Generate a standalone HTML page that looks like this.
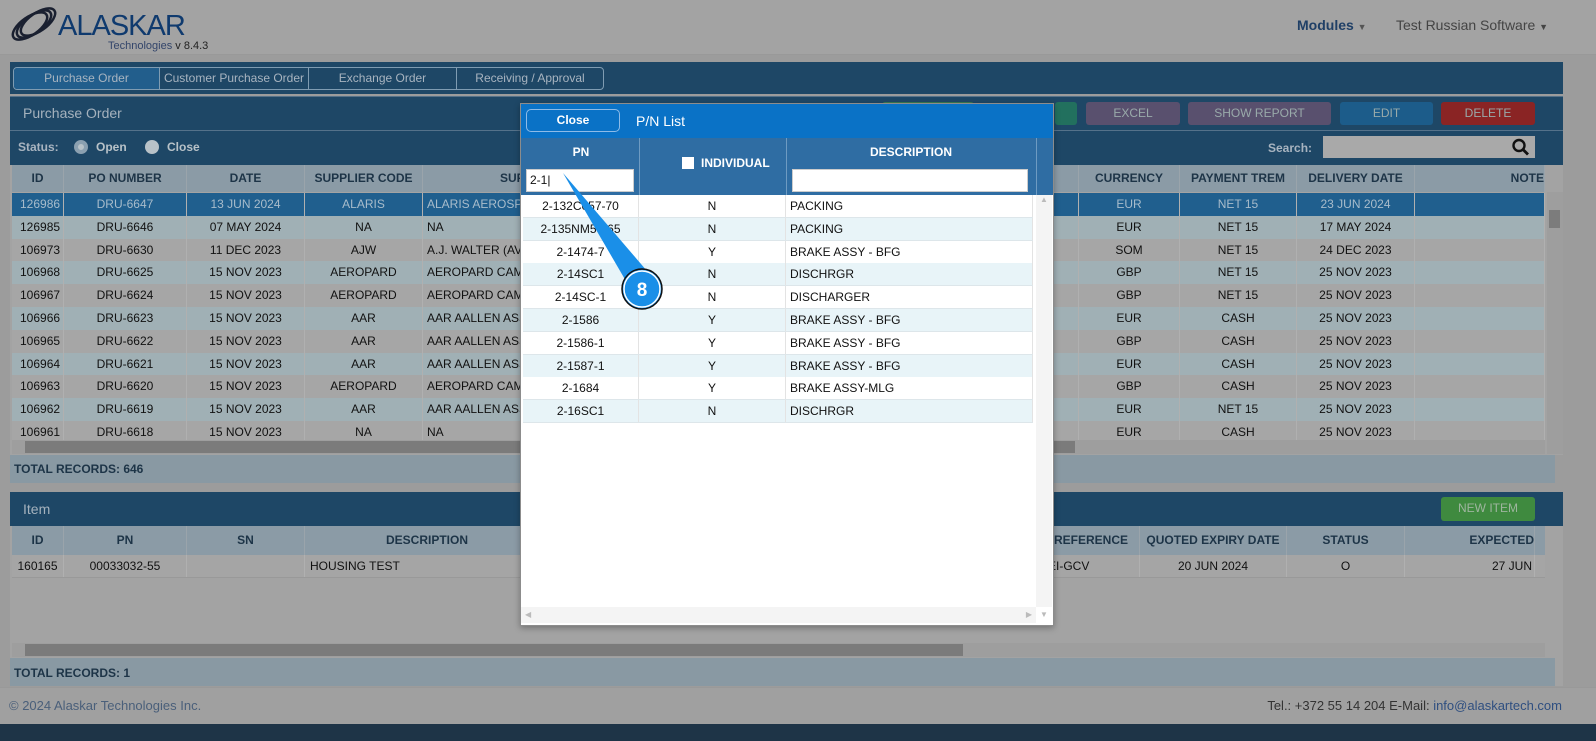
<!DOCTYPE html>
<html><head><meta charset="utf-8"><style>
*{box-sizing:border-box;margin:0;padding:0}
body{width:1596px;height:741px;overflow:hidden;background:#9c9c9c;font-family:"Liberation Sans",sans-serif;font-size:12px;color:#111;position:relative}
.a{position:absolute}
.row{position:absolute;left:12px;width:1533px;height:23px;display:flex}
.row div{border-right:1px solid #b0b0b0;line-height:22px;text-align:center;white-space:nowrap;overflow:hidden;flex:none}
.hd div{font-weight:bold;color:#1d3447;border-right:1px solid #9aa4ab}
.btn{position:absolute;top:102px;height:23px;border-radius:3px;color:#9aa;text-align:center;line-height:22px;font-size:12px}
.mr{position:absolute;left:523px;width:510px;height:23px;display:flex;border-bottom:1px solid #dde6ea}
.mr div{line-height:22px;flex:none;border-right:1px solid #e3e3e3}
</style></head><body>
<div class="a" style="left:0;top:0;width:1596px;height:55px;background:#a3a3a3;border-bottom:1px solid #999"></div>
<svg class="a" style="left:10px;top:4px" width="60" height="42" viewBox="0 0 60 42"><g fill="none" stroke="#1a2030" stroke-width="2.5"><ellipse cx="28" cy="18" rx="20" ry="9" transform="rotate(-35 28 18)"/><ellipse cx="24" cy="20" rx="20" ry="9" transform="rotate(-35 24 20)"/><ellipse cx="20" cy="22" rx="20" ry="9" transform="rotate(-35 20 22)"/></g></svg>
<div class="a" style="left:58px;top:10px;font-size:29px;color:#0f3a6e;letter-spacing:-1px">ALASKAR</div>
<div class="a" style="left:108px;top:40px;font-size:11px;color:#33456a">Technologies <span style="color:#222">v 8.4.3</span></div>
<div class="a" style="left:1297px;top:17px;font-weight:bold;font-size:14px;color:#1f3f66">Modules <span style="font-size:9px;color:#555">▼</span></div>
<div class="a" style="left:1396px;top:17px;font-size:14px;color:#444">Test Russian Software <span style="font-size:9px">▼</span></div>
<div class="a" style="left:10px;top:62px;width:1553px;height:32px;background:#1e4766"></div>
<div class="a" style="left:13px;top:67px;width:591px;height:23px;border:1px solid #7f9cb2;border-radius:4px;display:flex;color:#a8b4c0;font-size:12px">
<div style="width:146px;background:#225e8c;text-align:center;line-height:21px;border-radius:3px 0 0 3px;border-right:1px solid #7f9cb2">Purchase Order</div>
<div style="width:149px;text-align:center;line-height:21px;border-right:1px solid #7f9cb2">Customer Purchase Order</div>
<div style="width:148px;text-align:center;line-height:21px;border-right:1px solid #7f9cb2">Exchange Order</div>
<div style="width:146px;text-align:center;line-height:21px">Receiving / Approval</div></div>
<div class="a" style="left:10px;top:96px;width:1553px;height:34px;background:#1e4766;border-top:1px solid #55728a"></div>
<div class="a" style="left:23px;top:105px;font-size:14px;color:#a5b2bd">Purchase Order</div>
<div class="btn" style="left:882px;width:92px;background:#3a7a52"></div>
<div class="btn" style="left:1055px;width:22px;background:#22705e"></div>
<div class="btn" style="left:1086px;width:94px;background:#59506e">EXCEL</div>
<div class="btn" style="left:1188px;width:143px;background:#59506e">SHOW REPORT</div>
<div class="btn" style="left:1340px;width:93px;background:#1c5c8a">EDIT</div>
<div class="btn" style="left:1441px;width:94px;background:#8a2424">DELETE</div>
<div class="a" style="left:10px;top:130px;width:1553px;height:35px;background:#1e4766;border-top:1px solid #55728a"></div>
<div class="a" style="left:18px;top:140px;font-weight:bold;color:#a8b4c0">Status:</div>
<div class="a" style="left:74px;top:140px;width:14px;height:14px;border-radius:50%;background:#b8c2c8;border:4px solid #8ba0b0"></div>
<div class="a" style="left:96px;top:140px;font-weight:bold;color:#b8c2c8">Open</div>
<div class="a" style="left:145px;top:140px;width:14px;height:14px;border-radius:50%;background:#b8c2c8"></div>
<div class="a" style="left:167px;top:140px;font-weight:bold;color:#b8c2c8">Close</div>
<div class="a" style="left:1268px;top:141px;font-weight:bold;color:#a8b4c0">Search:</div>
<div class="a" style="left:1323px;top:136px;width:212px;height:22px;background:#a9a9a9"></div>
<svg class="a" style="left:1511px;top:138px" width="20" height="18" viewBox="0 0 20 18"><circle cx="8" cy="7.5" r="5.5" fill="none" stroke="#111" stroke-width="2.4"/><line x1="12" y1="11.5" x2="17" y2="16.5" stroke="#111" stroke-width="2.8"/></svg>
<div class="a" style="left:10px;top:165px;width:1553px;height:290px;background:#a3a3a3"></div>
<div class="row hd" style="top:165px;height:27px;background:#8b9ba6"><div style="width:52px;line-height:27px">ID</div><div style="width:123px;line-height:27px">PO NUMBER</div><div style="width:118px;line-height:27px">DATE</div><div style="width:118px;line-height:27px">SUPPLIER CODE</div><div style="width:656px;line-height:27px;text-align:left;padding-left:77px">SUP</div><div style="width:101px;line-height:27px">CURRENCY</div><div style="width:117px;line-height:27px">PAYMENT TREM</div><div style="width:118px;line-height:27px">DELIVERY DATE</div><div style="width:130px;line-height:27px;text-align:right">NOTE</div></div>
<div id="rows"></div>
<div class="a" style="left:1547px;top:192px;width:16px;height:262px;background:#9e9e9e"></div>
<div class="a" style="left:1549px;top:210px;width:11px;height:18px;background:#7c7c7c"></div>
<div class="a" style="left:12px;top:440px;width:1533px;height:14px;background:#9e9e9e"></div>
<div class="a" style="left:25px;top:441px;width:1050px;height:12px;background:#7b7b7b"></div>
<div class="a" style="left:10px;top:455px;width:1545px;height:28px;background:#8999a3"></div>
<div class="a" style="left:14px;top:462px;font-weight:bold;color:#1d3447">TOTAL RECORDS: 646</div>
<div class="a" style="left:10px;top:492px;width:1553px;height:34px;background:#1e4766"></div>
<div class="a" style="left:23px;top:501px;font-size:14px;color:#a5b2bd">Item</div>
<div class="a" style="left:1441px;top:497px;width:94px;height:24px;background:#3f8a3f;border-radius:3px;color:#9fb59f;text-align:center;line-height:23px">NEW ITEM</div>
<div class="a" style="left:10px;top:526px;width:1553px;height:160px;background:#a3a3a3"></div>
<div class="row hd" style="top:526px;height:29px;background:#8b9ba6"><div style="width:52px;line-height:29px">ID</div><div style="width:123px;line-height:29px">PN</div><div style="width:118px;line-height:29px">SN</div><div style="width:245px;line-height:29px">DESCRIPTION</div><div style="width:492px"></div><div style="width:98px;line-height:29px;text-align:right;padding-right:14px">R REFERENCE</div><div style="width:147px;line-height:29px">QUOTED EXPIRY DATE</div><div style="width:118px;line-height:29px">STATUS</div><div style="width:130px;line-height:29px;text-align:right">EXPECTED</div></div>
<div class="row" style="top:555px;background:#a5a5a5;border-bottom:1px solid #999"><div style="width:52px">160165</div><div style="width:123px">00033032-55</div><div style="width:118px"></div><div style="width:737px;text-align:left;padding-left:5px">HOUSING TEST</div><div style="width:98px;text-align:left;padding-left:6px">EI-GCV</div><div style="width:147px">20 JUN 2024</div><div style="width:118px">O</div><div style="width:130px;text-align:right;padding-right:2px">27 JUN</div></div>
<div class="a" style="left:12px;top:643px;width:1533px;height:14px;background:#9e9e9e"></div>
<div class="a" style="left:25px;top:644px;width:938px;height:12px;background:#7b7b7b"></div>
<div class="a" style="left:10px;top:658px;width:1545px;height:28px;background:#8999a3"></div>
<div class="a" style="left:14px;top:666px;font-weight:bold;color:#1d3447">TOTAL RECORDS: 1</div>
<div class="a" style="left:0;top:687px;width:1596px;height:37px;background:#a0a0a0;border-top:1px solid #999"></div>
<div class="a" style="left:9px;top:698px;font-size:13px;color:#4a5f7a">© 2024 Alaskar Technologies Inc.</div>
<div class="a" style="right:34px;top:698px;font-size:13px;color:#333">Tel.: +372 55 14 204 E-Mail: <span style="color:#2f4f80">info@alaskartech.com</span></div>
<div class="a" style="left:0;top:724px;width:1596px;height:17px;background:#1e3447"></div>
<div class="a" style="left:520px;top:103px;width:534px;height:523px;background:#fff;border:1px solid #8c8c8c;box-shadow:0 2px 6px rgba(0,0,0,.3)"></div>
<div class="a" style="left:521px;top:104px;width:532px;height:34px;background:#0a72c6"></div>
<div class="a" style="left:526px;top:109px;width:94px;height:23px;border:1px solid #8dbbe8;border-radius:5px;background:#0a72c6;color:#fff;font-weight:bold;text-align:center;line-height:20px">Close</div>
<div class="a" style="left:636px;top:113px;font-size:14px;color:#fff">P/N List</div>
<div class="a" style="left:521px;top:138px;width:532px;height:57px;background:#2f6da3"></div>
<div class="a" style="left:639px;top:138px;width:1px;height:57px;background:#6e9bc2"></div>
<div class="a" style="left:786px;top:138px;width:1px;height:57px;background:#6e9bc2"></div>
<div class="a" style="left:1036px;top:138px;width:1px;height:57px;background:#6e9bc2"></div>
<div class="a" style="left:523px;top:145px;width:116px;text-align:center;color:#fff;font-weight:bold">PN</div>
<div class="a" style="left:526px;top:169px;width:108px;height:23px;background:#fff;border:1px solid #ccc;padding-left:3px;line-height:21px">2-1|</div>
<div class="a" style="left:682px;top:157px;width:12px;height:12px;background:#fff"></div>
<div class="a" style="left:701px;top:156px;color:#fff;font-weight:bold">INDIVIDUAL</div>
<div class="a" style="left:786px;top:145px;width:250px;text-align:center;color:#fff;font-weight:bold">DESCRIPTION</div>
<div class="a" style="left:792px;top:169px;width:236px;height:23px;background:#fff;border:1px solid #ccc"></div>
<div id="mrows"></div>
<div class="a" style="left:1036px;top:195px;width:16px;height:412px;background:#f4f4f4;color:#bbb;font-size:8px;text-align:center">▲</div>
<div class="a" style="left:521px;top:607px;width:515px;height:16px;background:#f4f4f4;color:#bbb;font-size:8px;line-height:16px;padding:0 4px">◀<span style="float:right">▶</span></div>
<div class="a" style="left:1040px;top:610px;font-size:8px;color:#bbb">▼</div>
<svg class="a" style="left:560px;top:170px" width="110" height="142" viewBox="0 0 110 142"><path d="M3 3 L93 108 L70 118 Z" fill="#1a8fe8"/><circle cx="82" cy="119" r="20" fill="#1a8fe8" stroke="#111" stroke-width="1.5"/><circle cx="82" cy="119" r="18" fill="none" stroke="#fff" stroke-width="1.5"/><text x="82" y="126" text-anchor="middle" fill="#fff" font-family="Liberation Sans" font-weight="bold" font-size="19">8</text></svg>
<script>
var d=[["126986","DRU-6647","13 JUN 2024","ALARIS","ALARIS AEROSP","EUR","NET 15","23 JUN 2024"],["126985","DRU-6646","07 MAY 2024","NA","NA","EUR","NET 15","17 MAY 2024"],["106973","DRU-6630","11 DEC 2023","AJW","A.J. WALTER (AV","SOM","NET 15","24 DEC 2023"],["106968","DRU-6625","15 NOV 2023","AEROPARD","AEROPARD CAM","GBP","NET 15","25 NOV 2023"],["106967","DRU-6624","15 NOV 2023","AEROPARD","AEROPARD CAM","GBP","NET 15","25 NOV 2023"],["106966","DRU-6623","15 NOV 2023","AAR","AAR AALLEN ASS","EUR","CASH","25 NOV 2023"],["106965","DRU-6622","15 NOV 2023","AAR","AAR AALLEN ASS","GBP","CASH","25 NOV 2023"],["106964","DRU-6621","15 NOV 2023","AAR","AAR AALLEN ASS","EUR","CASH","25 NOV 2023"],["106963","DRU-6620","15 NOV 2023","AEROPARD","AEROPARD CAM","GBP","CASH","25 NOV 2023"],["106962","DRU-6619","15 NOV 2023","AAR","AAR AALLEN ASS","EUR","NET 15","25 NOV 2023"],["106961","DRU-6618","15 NOV 2023","NA","NA","EUR","CASH","25 NOV 2023"]];
var w=[52,123,118,118,656,101,117,118,130],h="";
d.forEach(function(r,i){var bg=i==0?"#205f8e":(i%2?"#a0b0b5":"#a6a6a6");var c=i==0?"#a8bccb":"#111";h+='<div class="row" style="top:'+(193+i*22.8)+'px;background:'+bg+';color:'+c+'">';r.concat([""]).forEach(function(t,j){h+='<div style="width:'+w[j]+'px;'+(j==4?'text-align:left;padding-left:4px':'')+(j==0?'text-align:left;padding-left:8px':'')+'">'+t+'</div>'});h+='</div>'});
document.getElementById("rows").innerHTML=h;
var m=[["2-132C057-70","N","PACKING"],["2-135NM50-65","N","PACKING"],["2-1474-7","Y","BRAKE ASSY - BFG"],["2-14SC1","N","DISCHRGR"],["2-14SC-1","N","DISCHARGER"],["2-1586","Y","BRAKE ASSY - BFG"],["2-1586-1","Y","BRAKE ASSY - BFG"],["2-1587-1","Y","BRAKE ASSY - BFG"],["2-1684","Y","BRAKE ASSY-MLG"],["2-16SC1","N","DISCHRGR"]];h="";
m.forEach(function(r,i){h+='<div class="mr" style="top:'+(195+i*22.8)+'px;background:'+(i%2?'#e8f4f8':'#fff')+'"><div style="width:116px;text-align:center">'+r[0]+'</div><div style="width:147px;text-align:center">'+r[1]+'</div><div style="width:247px;padding-left:4px">'+r[2]+'</div></div>'});
document.getElementById("mrows").innerHTML=h;
</script>
</body></html>
